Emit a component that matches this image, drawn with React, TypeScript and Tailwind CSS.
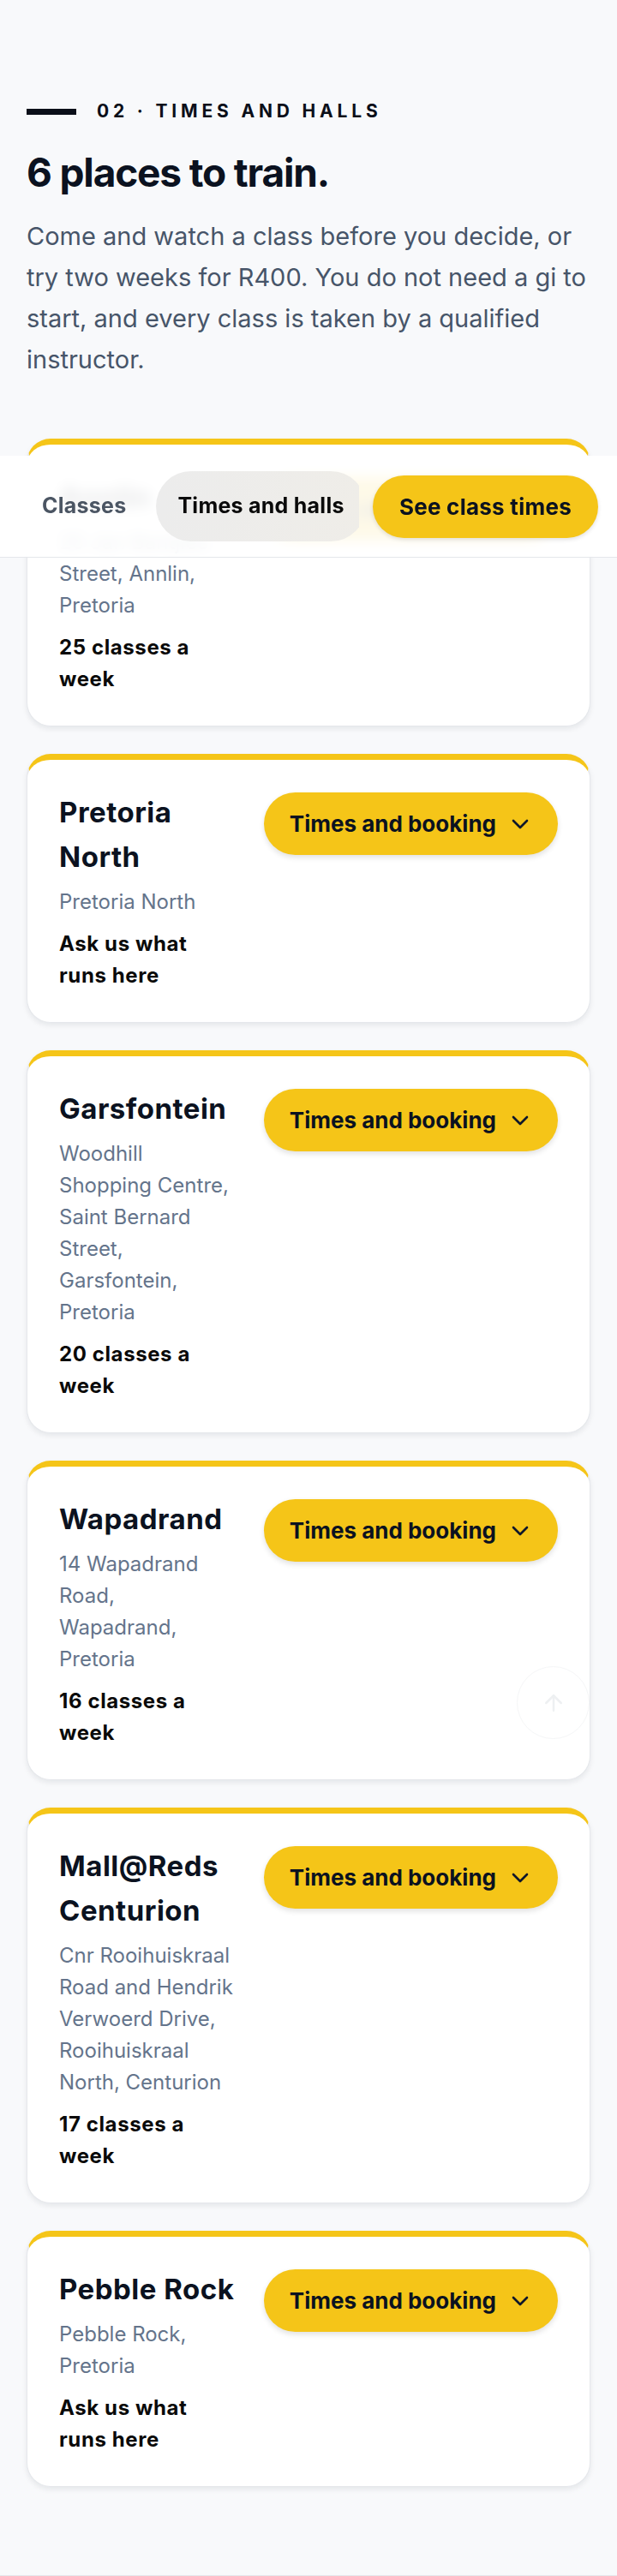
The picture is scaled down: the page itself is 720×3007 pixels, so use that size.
import { ArrowUp } from 'lucide-react';

interface Hall {
  name: string;
  // address lines are kept as they are printed on the hall cards
  address: string;
  classes: string;
}

const halls: Hall[] = [
  { name: 'Annlin', address: '25 Jan Bantjies\nStreet, Annlin,\nPretoria', classes: '25 classes a week' },
  { name: 'Pretoria North', address: 'Pretoria North', classes: 'Ask us what runs here' },
  {
    name: 'Garsfontein',
    address: 'Woodhill\nShopping Centre,\nSaint Bernard\nStreet,\nGarsfontein,\nPretoria',
    classes: '20 classes a week',
  },
  { name: 'Wapadrand', address: '14 Wapadrand\nRoad,\nWapadrand,\nPretoria', classes: '16 classes a week' },
  {
    name: 'Mall@Reds Centurion',
    address: 'Cnr Rooihuiskraal\nRoad and Hendrik\nVerwoerd Drive,\nRooihuiskraal\nNorth, Centurion',
    classes: '17 classes a week',
  },
  { name: 'Pebble Rock', address: 'Pebble Rock,\nPretoria', classes: 'Ask us what runs here' },
];

function Chevron() {
  return (
    <svg width="20" height="12" viewBox="0 0 20 12" fill="none" className="shrink-0">
      <polyline points="2,2 10,10 18,2" stroke="#0f172a" strokeWidth="2.6" strokeLinecap="round" strokeLinejoin="round" />
    </svg>
  );
}

function HallCard({ hall }: { hall: Hall }) {
  return (
    <div className="rounded-[28px] border border-gray-200 border-t-[7px] border-t-[#f5c518] bg-white px-[37px] pt-[35px] pb-[36px] shadow-[0_3px_6px_rgba(15,23,42,0.08)]">
      <div className="flex items-start justify-between">
        {/* Hall info */}
        <div className="w-[212px] min-w-0">
          <h3 className="text-[33px] font-bold leading-[52px] tracking-[0.015em] text-[#0b1220]">{hall.name}</h3>
          <p className="mt-[8px] whitespace-pre-line text-[24px] leading-[37px] text-[#64748b]">{hall.address}</p>
          <p className="mt-[12px] max-w-[196px] text-[24px] font-bold leading-[37px] tracking-[0.025em] text-[#0a0a0a]">
            {hall.classes}
          </p>
        </div>
        <button className="mt-[3px] flex h-[73px] shrink-0 items-center gap-[18px] rounded-full bg-[#f5c518] pl-[30px] pr-[34px] text-[26px] font-bold text-[#0b1220] shadow-[0_3px_6px_rgba(0,0,0,0.12)]">
          <span>Times and booking</span>
          <Chevron />
        </button>
      </div>
    </div>
  );
}

export default function App() {
  return (
    <div className="relative min-h-[3007px] bg-[#f8f9fb] font-['Inter',sans-serif]">
      <section className="border-b-2 border-gray-200 px-[31px] pt-[116px] pb-[103px]">
        {/* Eyebrow */}
        <div className="flex items-center gap-[24px]">
          <span className="h-[7px] w-[58px] bg-[#0b0f19]" />
          <span className="text-[21px] font-bold uppercase leading-[28px] tracking-[0.23em] text-[#0b0f19]">
            02 · Times and halls
          </span>
        </div>
        <h2 className="mt-[32px] text-[46px] font-bold leading-[50px] tracking-[-0.025em] text-[#0b1220]">
          6 places to train.
        </h2>
        <p className="mt-[26px] text-[29px] leading-[48px] text-[#475569]">
          Come and watch a class before you decide, or try two weeks for R400. You do not need a gi to start, and
          every class is taken by a qualified instructor.
        </p>

        {/* Halls */}
        <div className="mt-[68px] flex flex-col gap-[32px]">
          {halls.map((hall) => (
            <HallCard key={hall.name} hall={hall} />
          ))}
        </div>
      </section>

      {/* Sticky section nav, caught mid-scroll */}
      <nav className="absolute left-0 right-0 top-[532px] flex h-[119px] items-center gap-[16px] border-b border-gray-200 bg-white/90 pl-[24px] pr-[22px] backdrop-blur">
        <div className="flex min-w-0 flex-1 items-center gap-[10px] overflow-hidden">
          <span className="shrink-0 rounded-full px-[25px] py-[24px] text-[25px] font-bold tracking-[0.01em] text-[#4b5563]">
            Classes
          </span>
          <span className="shrink-0 rounded-full bg-gradient-to-r from-[#ececec] to-[#efede8] px-[25px] py-[22px] text-[25px] font-bold tracking-[0.01em] text-[#0a0a0a]">
            Times and halls
          </span>
        </div>
        <button className="flex h-[73px] shrink-0 items-center rounded-full bg-[#f5c518] px-[31px] text-[26px] font-bold tracking-[0.01em] text-[#0b1220] shadow-[0_2px_5px_rgba(0,0,0,0.12)]">
          See class times
        </button>
      </nav>

      {/* Back to top, faded out */}
      <div className="absolute left-[603px] top-[1945px] flex h-[85px] w-[85px] items-center justify-center rounded-full border border-[#f5f6f7] bg-white/60">
        <ArrowUp size={30} strokeWidth={2} className="text-[#eef0f2]" />
      </div>
    </div>
  );
}
